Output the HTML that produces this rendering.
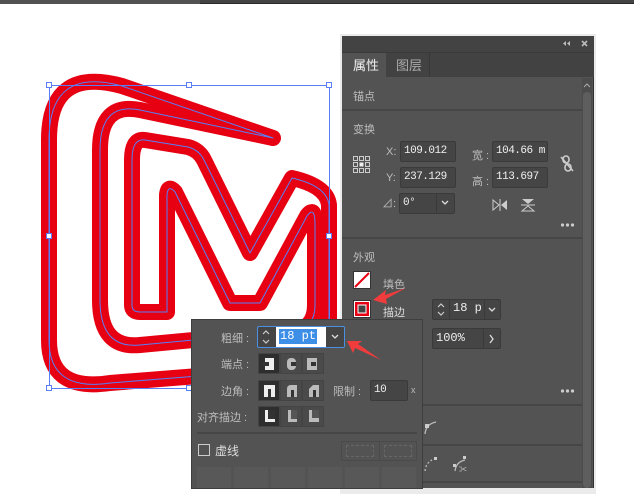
<!DOCTYPE html>
<html><head><meta charset="utf-8"><style>
*{margin:0;padding:0;box-sizing:border-box}
body{width:634px;height:488px;background:#fff;position:relative;overflow:hidden;font-family:"Liberation Sans","Noto Sans CJK SC",sans-serif;font-size:11px;color:#c8c8c8}
.a{position:absolute}
.inp{position:absolute;background:#454545;border:1px solid #3a3a3a;border-radius:2px;color:#f0f0f0;font-family:"Liberation Mono","Noto Sans CJK SC",monospace;font-size:11px;line-height:18px;padding-left:3px;letter-spacing:-0.5px;overflow:hidden;white-space:nowrap}
.lbl{position:absolute;color:#bdbdbd;font-size:11px}
.hl{position:absolute;height:2px;background:#464646}
.btn{position:absolute;width:22px;height:21px;background:#4a4a4a;border:1px solid #444}
</style></head><body>
<div class="a" style="left:0;top:0;width:634px;height:4px;background:#434343;border-bottom:1px solid #2a2a2a"></div>
<div class="a" style="left:0;top:0;width:200px;height:4px;background:#525252"></div>

<svg class="a" style="left:0;top:0" width="634" height="488">
<g fill="none" stroke-linejoin="round" stroke-linecap="round">
<path d="M273,138 L122,86 Q49,66 49,140 L49,340 Q49,392 110,383 L300,368 Q329,364 329,335 L329,205 Q327,186 292,178 L250,253 L204,160 Q199,150 188,147 L145,140 Q132,138 132,160 L132,305 Q132,312 140,312 L167,312 L167,195 Q168,184 175,192 L230,303 L260,303 L307,216 Q315,205 315,225 L315,305 Q315,330 290,331 L140,345 Q100,349 100,300 L100,150 Q100,102 140,110 L273,138" stroke="#e60012" stroke-width="16"/>
<path d="M273,138 L122,86 Q49,66 49,140 L49,340 Q49,392 110,383 L300,368 Q329,364 329,335 L329,205 Q327,186 292,178 L250,253 L204,160 Q199,150 188,147 L145,140 Q132,138 132,160 L132,305 Q132,312 140,312 L167,312 L167,195 Q168,184 175,192 L230,303 L260,303 L307,216 Q315,205 315,225 L315,305 Q315,330 290,331 L140,345 Q100,349 100,300 L100,150 Q100,102 140,110 L273,138" stroke="#5a7ff5" stroke-width="1"/>
</g>
<rect x="49.5" y="85.5" width="280" height="303" fill="none" stroke="#5a7ff5" stroke-width="1"/>
<g fill="#fff" stroke="#5a7ff5">
<rect x="46.5" y="82.5" width="5" height="5"/><rect x="186.5" y="82.5" width="5" height="5"/><rect x="326.5" y="82.5" width="5" height="5"/>
<rect x="46.5" y="233.5" width="5" height="5"/><rect x="326.5" y="233.5" width="5" height="5"/>
<rect x="46.5" y="385.5" width="5" height="5"/><rect x="186.5" y="385.5" width="5" height="5"/>
</g>
</svg>

<!-- panel -->
<div class="a" style="left:340px;top:34px;width:256px;height:460px;background:#d8d8d8;opacity:.5"></div>
<div class="a" style="left:342px;top:36px;width:252px;height:452px;background:#535353;border-right:1px solid #333"></div>
<div class="a" style="left:342px;top:36px;width:252px;height:16px;background:#434343"></div>
<svg class="a" style="left:560px;top:39px" width="30" height="10"><g fill="#bbb"><polygon points="3,4.5 6,2 6,7"/><polygon points="7,4.5 10,2 10,7"/></g><g stroke="#bbb" stroke-width="1.6"><line x1="22" y1="2" x2="27" y2="7"/><line x1="27" y1="2" x2="22" y2="7"/></g></svg>
<div class="a" style="left:342px;top:52px;width:252px;height:25px;background:#424242;border-top:1px solid #3a3a3a"></div>
<div class="a" style="left:342px;top:53px;width:44px;height:24px;background:#535353"></div>
<div class="a" style="left:386px;top:53px;width:44px;height:24px;border-right:1px solid #383838"></div>
<div class="a" style="left:353px;top:55px;font-size:13px;color:#f0f0f0">属性</div>
<div class="a" style="left:396px;top:55px;font-size:13px;color:#aaa">图层</div>
<div class="a" style="left:582px;top:78px;width:10px;height:410px;background:#4c4c4c"></div>
<div class="a" style="left:583px;top:92px;width:8px;height:396px;background:#5e5e5e;border-radius:4px"></div>
<svg class="a" style="left:582px;top:81px" width="10" height="8"><path d="M2,6 L5,3 L8,6" fill="none" stroke="#aaa"/></svg>

<div class="lbl" style="left:353px;top:88px">锚点</div>
<div class="hl" style="left:342px;top:109px;width:240px"></div>
<div class="lbl" style="left:353px;top:121px">变换</div>
<svg class="a" style="left:352px;top:155px" width="20" height="20"><g fill="none" stroke="#ccc" stroke-width="1"><rect x="1.5" y="1.5" width="4" height="4"/><rect x="7.5" y="1.5" width="4" height="4"/><rect x="13.5" y="1.5" width="4" height="4"/><rect x="1.5" y="7.5" width="4" height="4"/><rect x="13.5" y="7.5" width="4" height="4"/><rect x="1.5" y="13.5" width="4" height="4"/><rect x="7.5" y="13.5" width="4" height="4"/><rect x="13.5" y="13.5" width="4" height="4"/></g><rect x="7.5" y="7.5" width="4" height="4" fill="#eee"/></svg>
<div class="lbl" style="left:386px;top:146px">X:</div>
<div class="lbl" style="left:386px;top:172px">Y:</div>
<div class="lbl" style="left:382px;top:195px">⊿:</div>
<div class="inp" style="left:400px;top:141px;width:56px;height:21px">109.012</div>
<div class="inp" style="left:400px;top:167px;width:56px;height:21px">237.129</div>
<div class="inp" style="left:399px;top:193px;width:56px;height:21px">0°</div>
<div class="a" style="left:436px;top:194px;width:1px;height:19px;background:#3a3a3a"></div>
<svg class="a" style="left:440px;top:199px" width="10" height="8"><path d="M2,2 L5,5 L8,2" fill="none" stroke="#ddd" stroke-width="1.3"/></svg>
<div class="lbl" style="left:472px;top:147px">宽 :</div>
<div class="lbl" style="left:472px;top:173px">高 :</div>
<div class="inp" style="left:492px;top:141px;width:56px;height:21px">104.66 m</div>
<div class="inp" style="left:492px;top:167px;width:56px;height:21px">113.697</div>
<svg class="a" style="left:558px;top:155px" width="18" height="18"><g fill="none" stroke="#ccc" stroke-width="1.6"><rect x="5" y="1" width="6" height="7" rx="3"/><rect x="7" y="9" width="6" height="7" rx="3"/><line x1="3" y1="2" x2="15" y2="16"/></g></svg>
<svg class="a" style="left:492px;top:198px" width="44" height="14"><g fill="#ccc"><polygon points="1,2 7,7 1,12" fill="none" stroke="#ccc"/><polygon points="15,2 9,7 15,12"/><rect x="7.5" y="1" width="1" height="12"/><polygon points="30,1 42,1 36,6"/><polygon points="30,13 42,13 36,8" fill="none" stroke="#ccc"/><rect x="29" y="6.5" width="14" height="1"/></g></svg>
<svg class="a" style="left:560px;top:222px" width="16" height="6"><g fill="#ccc"><circle cx="2.5" cy="3" r="1.6"/><circle cx="7.5" cy="3" r="1.6"/><circle cx="12.5" cy="3" r="1.6"/></g></svg>
<div class="hl" style="left:342px;top:237px;width:240px"></div>
<div class="lbl" style="left:353px;top:249px">外观</div>
<svg class="a" style="left:353px;top:271px" width="18" height="18"><rect x="0.5" y="0.5" width="17" height="17" fill="#fff" stroke="#333"/><line x1="2" y1="16" x2="16" y2="2" stroke="#e60012" stroke-width="2"/></svg>
<div class="lbl" style="left:383px;top:276px">填色</div>
<svg class="a" style="left:353px;top:300px" width="18" height="18"><rect x="0.5" y="0.5" width="17" height="17" fill="#fff" stroke="#333"/><rect x="2" y="2" width="14" height="14" fill="#e60012"/><rect x="5" y="5" width="8" height="8" fill="#444" stroke="#fff"/></svg>
<div class="lbl" style="left:383px;top:304px;border-bottom:1px dotted #ccc;color:#ddd">描边</div>
<div class="a" style="left:432px;top:299px;width:69px;height:21px;background:#454545;border:1px solid #3a3a3a;border-radius:2px"></div>
<div class="a" style="left:449px;top:299px;width:1px;height:21px;background:#3a3a3a"></div>
<div class="a" style="left:484px;top:299px;width:1px;height:21px;background:#3a3a3a"></div>
<svg class="a" style="left:435px;top:301px" width="12" height="17"><path d="M3,6 L6,3 L9,6 M3,11 L6,14 L9,11" fill="none" stroke="#ccc" stroke-width="1.2"/></svg>
<div class="a" style="left:453px;top:301px;font-size:12px;color:#eee;font-family:'Liberation Mono',monospace;width:30px;overflow:hidden;white-space:nowrap">18 pt</div>
<svg class="a" style="left:487px;top:306px" width="10" height="8"><path d="M2,2 L5,5 L8,2" fill="none" stroke="#ddd" stroke-width="1.3"/></svg>
<div class="a" style="left:432px;top:328px;width:69px;height:21px;background:#454545;border:1px solid #3a3a3a;border-radius:2px"></div>
<div class="a" style="left:483px;top:328px;width:1px;height:21px;background:#3a3a3a"></div>
<div class="a" style="left:436px;top:331px;font-size:12px;color:#eee;font-family:'Liberation Mono',monospace">100%</div>
<svg class="a" style="left:487px;top:333px" width="10" height="12"><path d="M3,2 L6,6 L3,10" fill="none" stroke="#ddd" stroke-width="1.3"/></svg>
<svg class="a" style="left:560px;top:388px" width="16" height="6"><g fill="#ccc"><circle cx="2.5" cy="3" r="1.6"/><circle cx="7.5" cy="3" r="1.6"/><circle cx="12.5" cy="3" r="1.6"/></g></svg>
<div class="hl" style="left:422px;top:404px;width:160px"></div>
<div class="hl" style="left:422px;top:444px;width:160px"></div>
<div class="hl" style="left:422px;top:481px;width:160px"></div>
<svg class="a" style="left:422px;top:419px" width="50" height="56"><g fill="none" stroke="#bbb" stroke-width="1.3"><path d="M3,15 Q4,5 14,3"/><path d="M3,52 Q4,44 10,41" stroke-dasharray="2 2"/><path d="M33,52 Q34,43 43,41"/></g><g fill="#ccc"><rect x="3" y="5" width="4" height="4"/><rect x="12" y="38" width="3" height="3"/><rect x="31" y="45" width="3" height="3"/><rect x="41" y="37" width="3" height="3"/></g><text x="37" y="53" font-size="8" fill="#ccc">✂</text></svg>

<!-- popup -->
<div class="a" style="left:191px;top:319px;width:232px;height:170px;background:#535353;border:1px solid #3e3e3e"></div>
<div class="lbl" style="left:221px;top:330px">粗细 :</div>
<div class="lbl" style="left:221px;top:356px">端点 :</div>
<div class="lbl" style="left:221px;top:383px">边角 :</div>
<div class="lbl" style="left:197px;top:409px">对齐描边 :</div>
<div class="a" style="left:257px;top:326px;width:88px;height:22px;border:1px solid #4a90e2;border-radius:2px;background:#454545"></div>
<svg class="a" style="left:260px;top:328px" width="12" height="18"><path d="M3,6 L6,3 L9,6 M3,12 L6,15 L9,12" fill="none" stroke="#ccc" stroke-width="1.2"/></svg>
<div class="a" style="left:276px;top:327px;width:50px;height:20px;background:#fff"></div>
<div class="a" style="left:279px;top:329px;height:15px;background:#3d8ee6;color:#fff;font-family:'Liberation Mono',monospace;font-size:12px;line-height:15px;padding:0 1px">18 pt</div>
<svg class="a" style="left:330px;top:333px" width="10" height="8"><path d="M2,2 L5,5 L8,2" fill="none" stroke="#ddd" stroke-width="1.3"/></svg>
<div class="btn" style="left:258px;top:353px;background:#2e2e2e"></div><div class="btn" style="left:280px;top:353px"></div><div class="btn" style="left:302px;top:353px"></div>
<div class="btn" style="left:258px;top:380px;background:#2e2e2e"></div><div class="btn" style="left:280px;top:380px"></div><div class="btn" style="left:302px;top:380px"></div>
<div class="btn" style="left:258px;top:406px;background:#2e2e2e"></div><div class="btn" style="left:280px;top:406px"></div><div class="btn" style="left:302px;top:406px"></div>
<svg class="a" style="left:258px;top:353px" width="66" height="74"><g fill="#eee"><rect x="7" y="5" width="9" height="12"/><rect x="29" y="5" width="9" height="12" rx="4" fill="#bbb"/><rect x="49" y="5" width="10" height="12" fill="#bbb"/><rect x="6" y="32" width="11" height="12"/><path d="M29,44 L29,36 Q29,32 33,32 L39,32 L39,44Z" fill="#bbb"/><path d="M51,44 L51,36 L55,32 L61,32 L61,44Z" fill="#bbb"/><rect x="7" y="57" width="10" height="12"/><rect x="30" y="57" width="9" height="12" fill="#bbb"/><rect x="51" y="57" width="10" height="12" fill="#bbb"/></g><g fill="#333"><rect x="5" y="9" width="6" height="4"/><rect x="33" y="9" width="5" height="4"/><rect x="53" y="9" width="5" height="4"/><rect x="10" y="36" width="3" height="8"/><rect x="33" y="37" width="3" height="7"/><rect x="55" y="37" width="3" height="7"/><rect x="10" y="57" width="7" height="9"/><rect x="33" y="57" width="6" height="9" fill="#555"/><rect x="54" y="57" width="7" height="8" fill="#555"/></g></svg>
<div class="lbl" style="left:333px;top:383px">限制 :</div>
<div class="inp" style="left:370px;top:380px;width:38px;height:21px">10</div>
<div class="a" style="left:411px;top:385px;font-size:9px;color:#bbb">x</div>
<div class="a" style="left:197px;top:432px;width:220px;height:2px;background:#464646"></div>
<div class="a" style="left:198px;top:444px;width:12px;height:12px;border:1px solid #ccc"></div>
<div class="a" style="left:215px;top:442px;color:#ddd;font-size:12px">虚线</div>
<div class="a" style="left:341px;top:441px;width:76px;height:20px;border:1px solid #4a4a4a"></div>
<div class="a" style="left:379px;top:441px;width:1px;height:20px;background:#4a4a4a"></div>
<div class="a" style="left:346px;top:445px;width:28px;height:12px;border:1px dashed #666"></div>
<div class="a" style="left:384px;top:445px;width:28px;height:12px;border:1px dashed #666"></div>
<div class="a" style="left:197px;top:467px;width:34px;height:21px;background:#585858"></div>
<div class="a" style="left:234px;top:467px;width:34px;height:21px;background:#585858"></div>
<div class="a" style="left:271px;top:467px;width:34px;height:21px;background:#585858"></div>
<div class="a" style="left:308px;top:467px;width:34px;height:21px;background:#585858"></div>
<div class="a" style="left:345px;top:467px;width:34px;height:21px;background:#585858"></div>
<div class="a" style="left:382px;top:467px;width:34px;height:21px;background:#585858"></div>

<svg class="a" style="left:0;top:0" width="634" height="488"><g fill="#f03c3c">
<polygon points="373,300 386,290 385,295 406,288 386,299 387,304"/>
<polygon points="347,341 362,341 358,344 381,360 355,348 353,353"/>
</g></svg>
</body></html>
